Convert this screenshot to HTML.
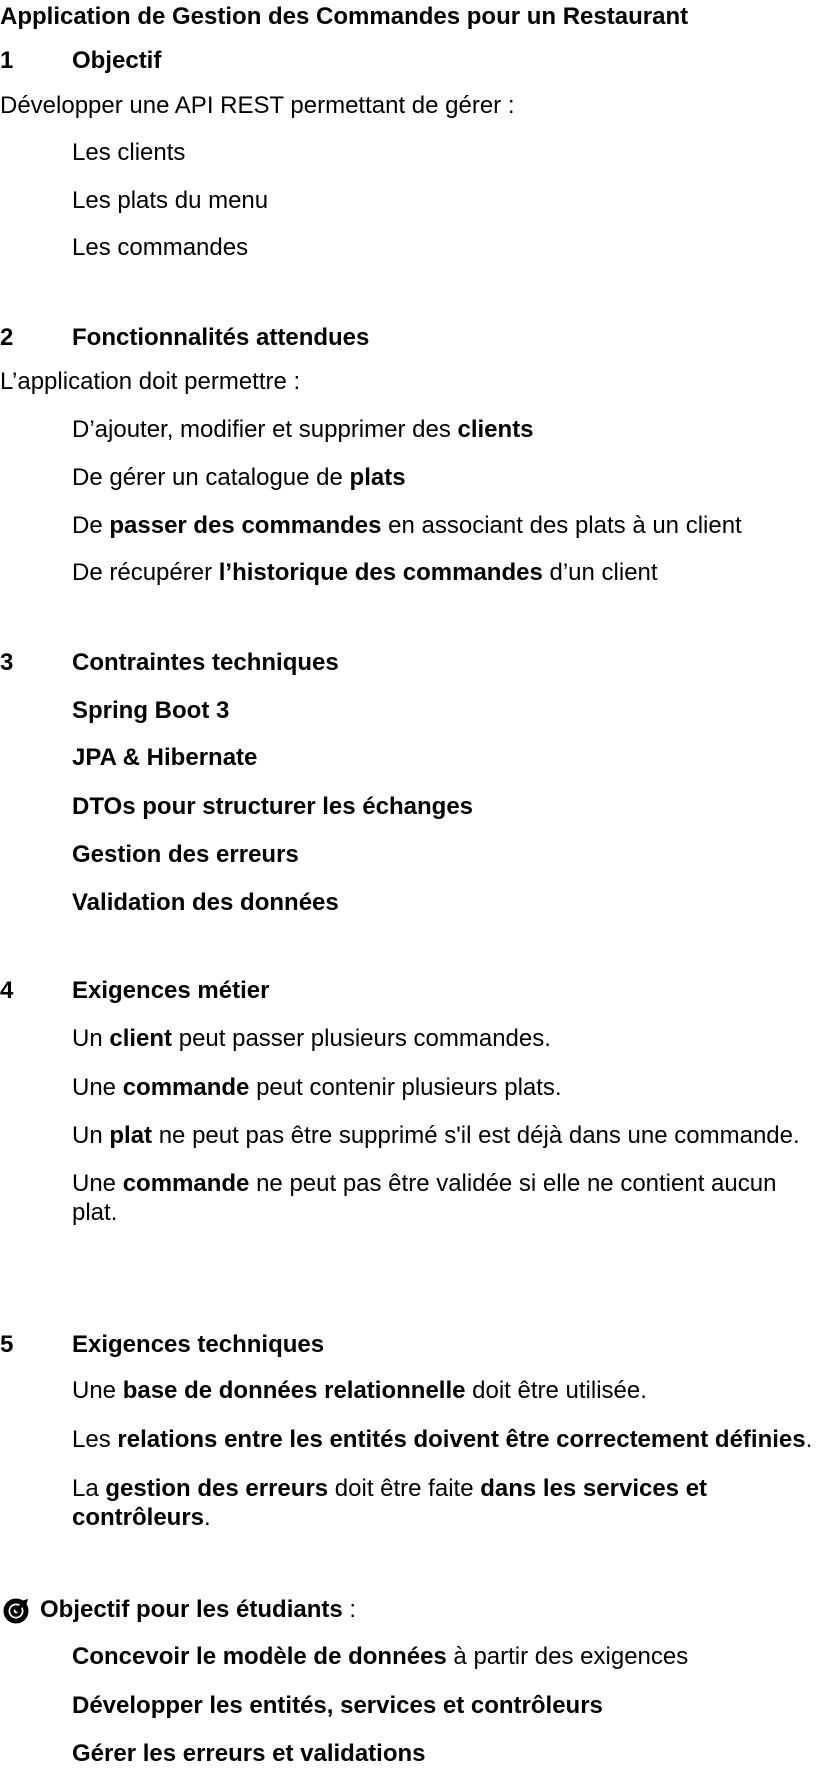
<!DOCTYPE html>
<html><head><meta charset="utf-8"><style>
body{margin:0;background:#fff;width:830px;height:1782px;position:relative;overflow:hidden;font-family:"Liberation Sans",Arial,sans-serif;color:#000;font-size:24px}
.l{position:absolute;left:72px;line-height:28px;white-space:nowrap}
.h{position:absolute;left:0;line-height:28px;font-weight:bold;white-space:nowrap}
.h span{position:absolute;left:72px}
.w{white-space:normal;width:735px;line-height:29px}
b{font-weight:bold}
div{margin-top:2px}
</style></head><body>
<div class="h" style="top:1px">Application de Gestion des Commandes pour un Restaurant</div>
<div class="h" style="top:45px">1<span>Objectif</span></div>
<div class="l" style="left:0;top:90px">Développer une API REST permettant de gérer :</div>
<div class="l" style="top:137px">Les clients</div>
<div class="l" style="top:185px">Les plats du menu</div>
<div class="l" style="top:232px">Les commandes</div>

<div class="h" style="top:322px">2<span>Fonctionnalités attendues</span></div>
<div class="l" style="left:0;top:366px">L’application doit permettre :</div>
<div class="l" style="top:414px">D’ajouter, modifier et supprimer des <b>clients</b></div>
<div class="l" style="top:462px">De gérer un catalogue de <b>plats</b></div>
<div class="l" style="top:510px">De <b>passer des commandes</b> en associant des plats à un client</div>
<div class="l" style="top:557px">De récupérer <b>l’historique des commandes</b> d’un client</div>

<div class="h" style="top:647px">3<span>Contraintes techniques</span></div>
<div class="l" style="top:695px"><b>Spring Boot 3</b></div>
<div class="l" style="top:742px"><b>JPA &amp; Hibernate</b></div>
<div class="l" style="top:791px"><b>DTOs pour structurer les échanges</b></div>
<div class="l" style="top:839px"><b>Gestion des erreurs</b></div>
<div class="l" style="top:887px"><b>Validation des données</b></div>

<div class="h" style="top:975px">4<span>Exigences métier</span></div>
<div class="l" style="top:1023px">Un <b>client</b> peut passer plusieurs commandes.</div>
<div class="l" style="top:1072px">Une <b>commande</b> peut contenir plusieurs plats.</div>
<div class="l" style="top:1120px">Un <b>plat</b> ne peut pas être supprimé s'il est déjà dans une commande.</div>
<div class="l w" style="top:1167px">Une <b>commande</b> ne peut pas être validée si elle ne contient aucun plat.</div>

<div class="h" style="top:1329px">5<span>Exigences techniques</span></div>
<div class="l" style="top:1375px">Une <b>base de données relationnelle</b> doit être utilisée.</div>
<div class="l" style="top:1424px">Les <b>relations entre les entités doivent être correctement définies</b>.</div>
<div class="l w" style="top:1472px">La <b>gestion des erreurs</b> doit être faite <b>dans les services et contrôleurs</b>.</div>

<svg style="position:absolute;left:3px;top:1598px" width="26" height="26" viewBox="0 0 26 26">
<circle cx="13" cy="13" r="10" fill="none" stroke="#000" stroke-width="5"/>
<circle cx="13" cy="13" r="4" fill="none" stroke="#000" stroke-width="3.5"/>
<path d="M13 13 L21 5" stroke="#000" stroke-width="3.5"/>
<path d="M18 3 L25 1 L23 8 Z" fill="#000"/>
</svg>
<div class="l" style="left:40px;top:1594px"><b>Objectif pour les étudiants</b> :</div>
<div class="l" style="top:1641px"><b>Concevoir le modèle de données</b> à partir des exigences</div>
<div class="l" style="top:1690px"><b>Développer les entités, services et contrôleurs</b></div>
<div class="l" style="top:1738px"><b>Gérer les erreurs et validations</b></div>
</body></html>
